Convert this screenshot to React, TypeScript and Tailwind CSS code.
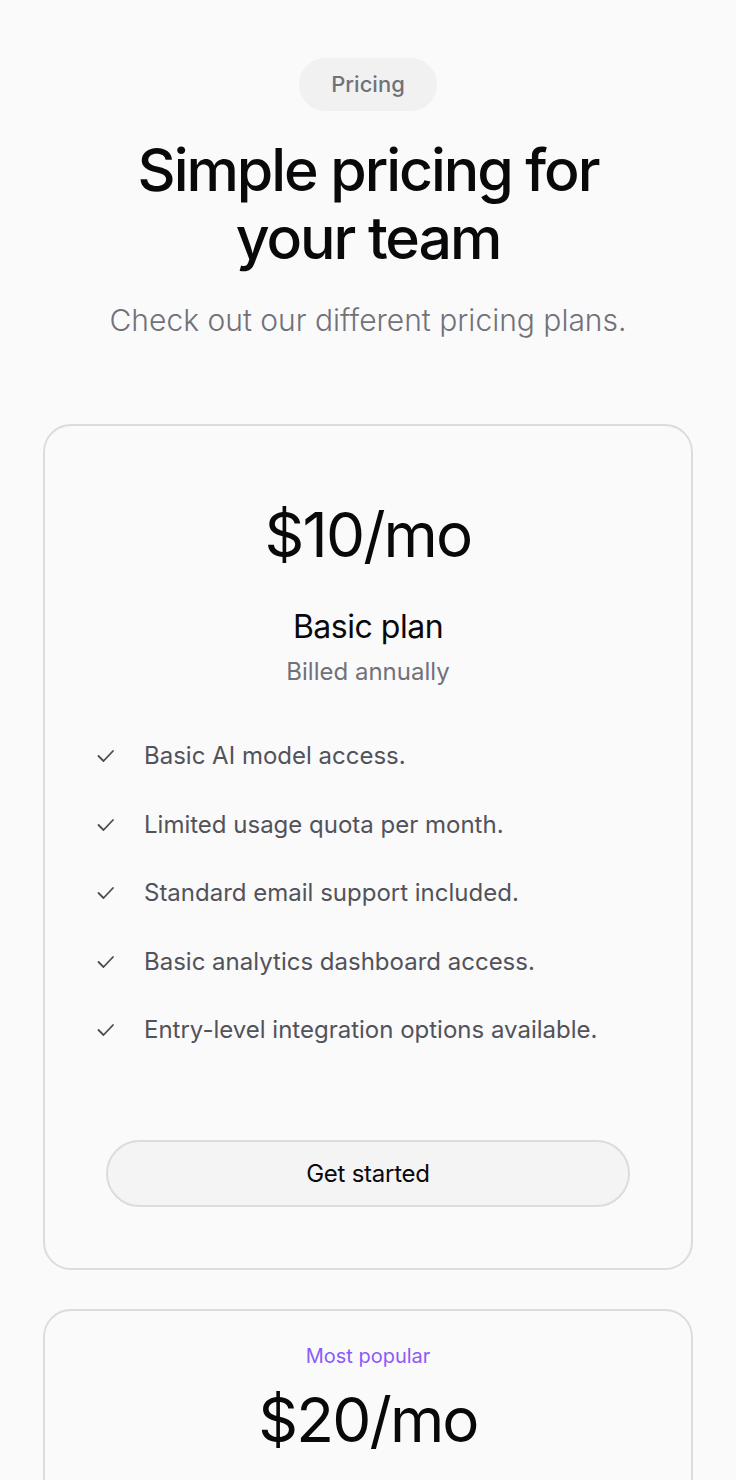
const features = [
  'Basic AI model access.',
  'Limited usage quota per month.',
  'Standard email support included.',
  'Basic analytics dashboard access.',
  'Entry-level integration options available.',
];

function CheckMark() {
  return (
    <svg width="20" height="20" viewBox="0 0 20 20" fill="none" className="shrink-0 text-[#4b4b52]">
      <path d="M2.5 10 L7.5 15 L17 5" stroke="currentColor" strokeWidth="1.8" strokeLinecap="round" strokeLinejoin="round" />
    </svg>
  );
}

interface PlanProps {
  price: string;
  name?: string;
  billing?: string;
  popular?: boolean;
  items?: string[];
}

function PlanCard({ price, name, billing, popular, items }: PlanProps) {
  return (
    <div className="rounded-[28px] border-2 border-[#dcdce0] bg-[#fafafa] pt-[31px] pb-[61px] px-[51px]">
      <p className={`text-center text-[20px] leading-[28px] text-[#8b5cf6] ${popular ? '' : 'invisible'}`}>
        Most popular
      </p>
      <p className="mt-[14px] text-center text-[62px] leading-[72px] tracking-[-0.03em] text-[#09090b]">{price}</p>
      {name && (
        <p className="mt-[36px] text-center text-[32px] leading-[40px] tracking-[-0.015em] text-[#09090b]">{name}</p>
      )}
      {billing && (
        <p className="mt-[9px] text-center text-[24px] leading-[32px] text-[#71717a]">{billing}</p>
      )}
      {items && (
        <ul className="mt-[52px] flex flex-col gap-[36.5px]">
          {items.map((f) => (
            <li key={f} className="flex items-center gap-[28px] text-[24px] leading-[32px] text-[#52525b]">
              <CheckMark />
              <span>{f}</span>
            </li>
          ))}
        </ul>
      )}
      {items && (
        <div className="mt-[94px] px-[10px]">
          <button className="w-full h-[67px] rounded-full border-2 border-[#dcdce0] bg-[#f4f4f5] text-[24px] tracking-[-0.01em] text-[#09090b]">
            Get started
          </button>
        </div>
      )}
    </div>
  );
}

export default function App() {
  return (
    <div className="min-h-[1480px] bg-[#fafafa] px-[43px] pt-[58px] font-['Inter',sans-serif]">
      <div className="flex flex-col items-center text-center">
        <span className="rounded-full bg-[#f1f1f2] px-8 py-3 text-[22px] leading-[29px] font-medium text-[#71717a]">
          Pricing
        </span>
        <h1 className="mt-[25px] max-w-[480px] text-[59px] leading-[68px] tracking-[-0.035em] font-medium text-[#09090b]">
          Simple pricing for your team
        </h1>
        <p className="mt-[28px] text-[30px] leading-[40px] font-light text-[#71717a]">
          Check out our different pricing plans.
        </p>
      </div>
      <div className="mt-[84px] flex flex-col gap-[39px]">
        <PlanCard price="$10/mo" name="Basic plan" billing="Billed annually" items={features} />
        <PlanCard price="$20/mo" name="Pro plan" billing="Billed annually" popular items={features} />
      </div>
    </div>
  );
}
